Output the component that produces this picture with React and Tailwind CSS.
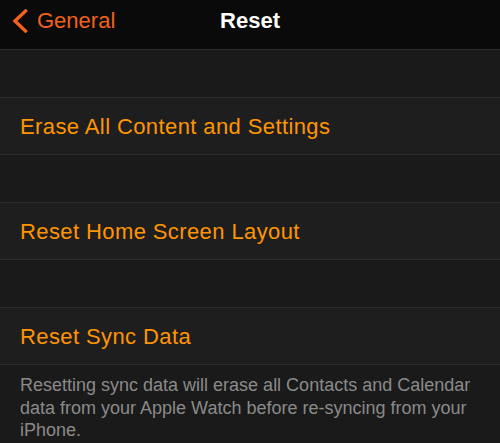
export default function App() {
  const font = { fontFamily: '"Liberation Sans", Arial, sans-serif' };
  const Row = ({ children }) => (
    <div className="h-[58px] flex items-center px-5 bg-[#1e1e1e] border-t border-b border-[#2c2c2c] text-[22px] tracking-[0.4px] text-[#ff9500]">
      {children}
    </div>
  );
  return (
    <div className="w-[500px] h-[443px] overflow-hidden bg-[#1a1a1a]" style={font}>
      <div className="h-[50px] bg-[#0a0a0a] border-b border-[#2c2c2c] relative flex items-center pb-[8px]">
        <div className="flex items-center pl-[11px] text-[#f2621a] text-[22px]">
          <svg width="18" height="24" viewBox="0 0 18 24" className="mr-[8px]">
            <path d="M14.5 2 L4 12 L14.5 22" fill="none" stroke="#f2621a" strokeWidth="3.4" strokeLinecap="square" />
          </svg>
          <span>General</span>
        </div>
        <div className="absolute left-0 right-0 text-center text-white font-bold text-[22px] pointer-events-none">Reset</div>
      </div>
      <div className="h-[47px]" />
      <Row>Erase All Content and Settings</Row>
      <div className="h-[47px]" />
      <Row>Reset Home Screen Layout</Row>
      <div className="h-[47px]" />
      <Row>Reset Sync Data</Row>
      <div className="px-5 pt-[9px] text-[18px] leading-[22.5px] text-[#8a8a8a]">
        Resetting sync data will erase all Contacts and Calendar data from your Apple Watch before re-syncing from your iPhone.
      </div>
    </div>
  );
}
